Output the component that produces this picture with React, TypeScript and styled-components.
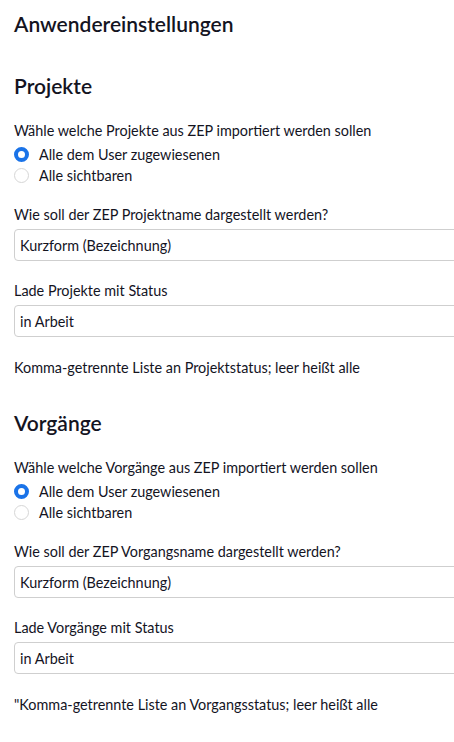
import React, { FC } from "react";
import styled, { createGlobalStyle } from "styled-components";

const GlobalStyle = createGlobalStyle`
  html, body {
    margin: 0;
    padding: 0;
    background: #fff;
    overflow: hidden;
  }
  body {
    font-family: "Lato", "Liberation Sans", sans-serif;
    color: #14141f;
  }
`;

const Page = styled.div`
  display: flex;
  flex-direction: column;
  padding: 10px 0 0 14px;
  width: 460px;
`;

const PageTitle = styled.h1`
  margin: 0 0 34px;
  font-size: 21px;
  line-height: 28px;
  font-weight: 600;
`;

const Section = styled.section`
  display: flex;
  flex-direction: column;
  margin-bottom: 31px;
`;

const SectionTitle = styled.h2`
  margin: 0 0 21px;
  font-size: 21px;
  line-height: 28px;
  font-weight: 600;
`;

const Field = styled.div`
  display: flex;
  flex-direction: column;
  margin-bottom: 18px;
`;

const Label = styled.label`
  font-size: 14.4px;
  line-height: 20px;
`;

const RadioGroup = styled.div`
  display: flex;
  flex-direction: column;
  margin-top: 3px;
  margin-bottom: 1px;
`;

const RadioRow = styled.label`
  display: flex;
  align-items: center;
  gap: 10px;
  height: 21px;
  font-size: 14.4px;
`;

const RadioDot = styled.span<{ $checked?: boolean }>`
  box-sizing: border-box;
  width: 15px;
  height: 15px;
  border-radius: 50%;
  border: ${(p) => (p.$checked ? "4.5px solid #1a73e8" : "1px solid #d6d6d6")};
  background: #fff;
`;

const TextBox = styled.div`
  box-sizing: border-box;
  margin-top: 4px;
  margin-bottom: 2px;
  height: 32px;
  padding: 0 5px;
  display: flex;
  align-items: center;
  border: 1px solid #cfcfcf;
  border-radius: 4px;
  font-size: 14.4px;
`;

const Hint = styled.div`
  font-size: 14.4px;
  line-height: 20px;
  margin-top: 1px;
`;

interface SectionProps {
  title: string;
  kind: string;
  nameLabel: string;
  statusLabel: string;
  hint: string;
}

const SettingsSection: FC<SectionProps> = ({ title, kind, nameLabel, statusLabel, hint }) => (
  <Section>
    <SectionTitle>{title}</SectionTitle>
    <Field>
      <Label>Wähle welche {kind} aus ZEP importiert werden sollen</Label>
      <RadioGroup>
        <RadioRow>
          <RadioDot $checked />
          Alle dem User zugewiesenen
        </RadioRow>
        <RadioRow>
          <RadioDot />
          Alle sichtbaren
        </RadioRow>
      </RadioGroup>
    </Field>
    <Field>
      <Label>{nameLabel}</Label>
      <TextBox>Kurzform (Bezeichnung)</TextBox>
    </Field>
    <Field>
      <Label>{statusLabel}</Label>
      <TextBox>in Arbeit</TextBox>
    </Field>
    <Hint>{hint}</Hint>
  </Section>
);

export default function App() {
  return (
    <>
      <GlobalStyle />
      <Page>
        <PageTitle>Anwendereinstellungen</PageTitle>
        <SettingsSection
          title="Projekte"
          kind="Projekte"
          nameLabel="Wie soll der ZEP Projektname dargestellt werden?"
          statusLabel="Lade Projekte mit Status"
          hint="Komma-getrennte Liste an Projektstatus; leer heißt alle"
        />
        <SettingsSection
          title="Vorgänge"
          kind="Vorgänge"
          nameLabel="Wie soll der ZEP Vorgangsname dargestellt werden?"
          statusLabel="Lade Vorgänge mit Status"
          hint={'"Komma-getrennte Liste an Vorgangsstatus; leer heißt alle'}
        />
      </Page>
    </>
  );
}
